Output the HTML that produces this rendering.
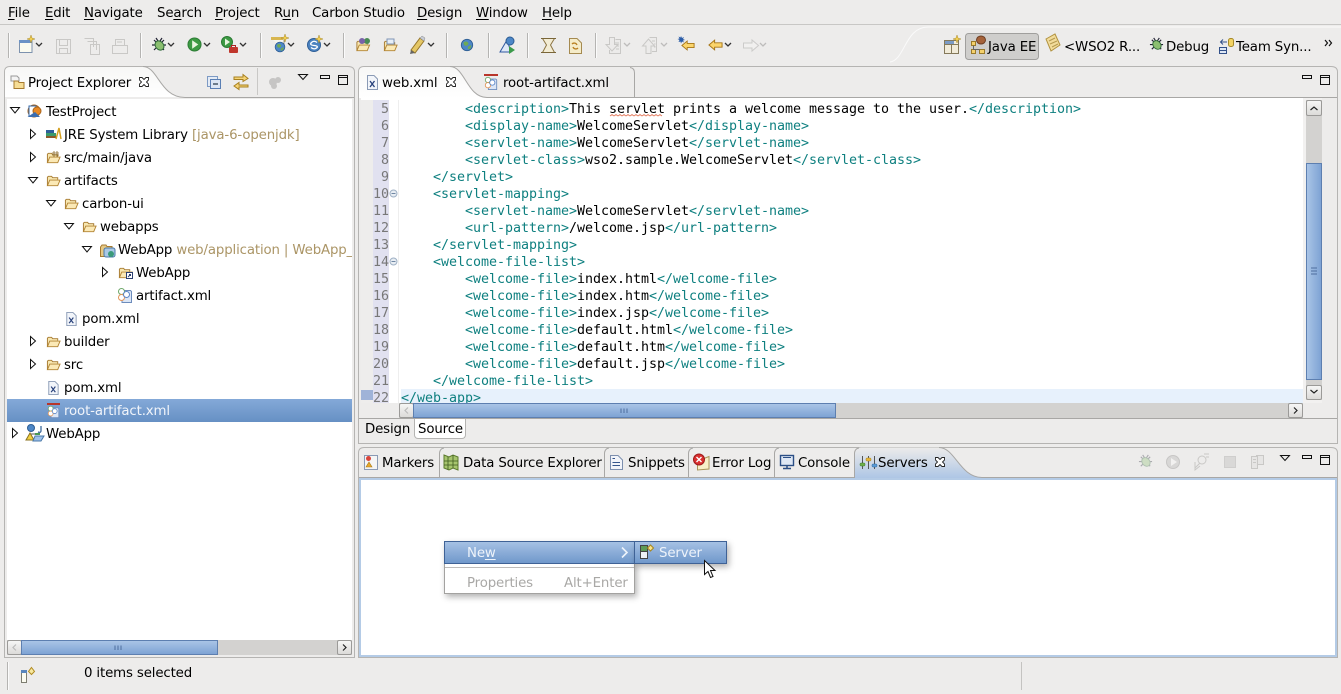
<!DOCTYPE html>
<html><head><meta charset="utf-8"><title>Eclipse</title>
<style>
html,body{margin:0;padding:0}
body{width:1341px;height:694px;overflow:hidden;position:relative;background:#edeceb;font-family:"DejaVu Sans","Liberation Sans",sans-serif;font-size:13.33px;letter-spacing:-.14px;color:#000}
.t{position:absolute;white-space:pre;line-height:16px;height:16px;margin-top:2px}
.a{position:absolute}
u{text-decoration:underline;text-underline-offset:2px}
.d{color:#ab9566}
.c{position:absolute;left:401px;white-space:pre;font-family:"DejaVu Sans Mono","Liberation Mono",monospace;font-size:13.33px;letter-spacing:-.024px;line-height:17px;height:17px;color:#000;margin-top:1px}
.c i{font-style:normal;color:#0f8080}
.n{position:absolute;width:30px;left:359px;text-align:right;font-family:"DejaVu Sans Mono","Liberation Mono",monospace;font-size:13.33px;letter-spacing:0;line-height:17px;height:17px;color:#787878;margin-top:1px}
svg.i{position:absolute;width:16px;height:16px;overflow:visible}
.sep{position:absolute;width:1px;background:#b5b4b2;border-right:1px solid #fbfbfb}
.bt{position:absolute;box-sizing:border-box;background:linear-gradient(#f6f6f5,#dcdbd9);border:1px solid #9b9a98;border-radius:2px}
.th{position:absolute;box-sizing:border-box;background:linear-gradient(#a9c4e6,#7ea3d4);border:1px solid #5d7fb0}
</style></head><body>

<svg width="0" height="0" style="position:absolute">
<defs>
<symbol id="fo" viewBox="0 0 16 16"><path d="M1.5 13.5V4.5L2.5 3.500H6L7 5H12.500V7" fill="#f8e7b0" stroke="#a67a30"/><path d="M1.500 13.500L4 7.500H15L12.500 13.500Z" fill="#fbe9b6" stroke="#b28434"/></symbol>
<symbol id="x" viewBox="0 0 16 16"><path d="M3.500 1.500H10L13.500 5V15.500H3.500Z" fill="#f2f5fa" stroke="#8a9ab5"/><path d="M6 7L10.500 13M10.500 7L6 13" stroke="#27407a" stroke-width="1.300"/></symbol>
<symbol id="art" viewBox="0 0 16 16"><path d="M5 3.500H13.500L14.500 4.500V15.500H5Z" fill="#dbe6f6" stroke="#6d8cbc"/><circle cx="4.500" cy="4.500" r="3" fill="#fff" stroke="#6ea86a"/><circle cx="4.500" cy="10.500" r="3" fill="#fff" stroke="#e2965a"/><circle cx="9.500" cy="7.500" r="3" fill="#fff" stroke="#5b86c8"/></symbol>
<symbol id="bug" viewBox="0 0 16 16"><path d="M3 3L13 13M13 3L3 13M1 8H15M5 1L7 4M11 1L9 4" stroke="#223" stroke-width="1.200"/><ellipse cx="8.500" cy="8.500" rx="4" ry="5" transform="rotate(-40 8.500 8.500)" fill="#8bbf70" stroke="#2f6a3a"/></symbol>
<symbol id="run" viewBox="0 0 16 16"><circle cx="8" cy="8" r="7" fill="#3d9a43" stroke="#2b7a33"/><path d="M5.500 3.500L12 8L5.500 12.500Z" fill="#e8f5df"/></symbol>
<symbol id="globe" viewBox="0 0 16 16"><circle cx="8" cy="8" r="6.500" fill="#4d87c7" stroke="#2d5d93"/><path d="M4 5Q7 3 9 5T7 9Q4 9 4 5ZM9 10L13 8L12 12L9 13Z" fill="#6faa55"/></symbol>
<symbol id="pj" viewBox="0 0 16 16"><path d="M2 2H8L10 4V7H2Z" fill="#f4f4f4" stroke="#999"/><path d="M5 7H9L10 8.500H15V14.500H5Z" fill="#f6dd95" stroke="#a67a30"/></symbol>
<symbol id="larr" viewBox="0 0 18 16"><path d="M1.500 8L8 2.500V5.500H16.500V10.500H8V13.500Z" fill="#fbd56c" stroke="#a67518" stroke-width="1.100"/></symbol>
</defs>
</svg>

<!-- menu -->
<div class="a" style="left:0;top:24px;width:1341px;height:1px;background:#c8c7c5"></div>
<div class="t" style="left:8px;top:4px"><u>F</u>ile</div>
<div class="t" style="left:45px;top:4px"><u>E</u>dit</div>
<div class="t" style="left:84px;top:4px"><u>N</u>avigate</div>
<div class="t" style="left:157px;top:4px">Se<u>a</u>rch</div>
<div class="t" style="left:215px;top:4px"><u>P</u>roject</div>
<div class="t" style="left:274px;top:4px">R<u>u</u>n</div>
<div class="t" style="left:312px;top:4px">Carbon Studio</div>
<div class="t" style="left:417px;top:4px"><u>D</u>esign</div>
<div class="t" style="left:476px;top:4px"><u>W</u>indow</div>
<div class="t" style="left:542px;top:4px"><u>H</u>elp</div>

<!-- toolbar separators -->
<div class="sep" style="left:8px;top:33px;height:25px"></div>
<div class="sep" style="left:140px;top:33px;height:25px"></div>
<div class="sep" style="left:260px;top:33px;height:25px"></div>
<div class="sep" style="left:343px;top:33px;height:25px"></div>
<div class="sep" style="left:446px;top:33px;height:25px"></div>
<div class="sep" style="left:488px;top:33px;height:25px"></div>
<div class="sep" style="left:527px;top:33px;height:25px"></div>
<div class="sep" style="left:595px;top:33px;height:25px"></div>

<!-- toolbar icons and all frames -->
<svg class="a" style="left:0;top:0" width="1341" height="694">
<defs>
<linearGradient id="tabW" x1="0" y1="0" x2="0" y2="1"><stop offset="0" stop-color="#f7f7f6"/><stop offset="1" stop-color="#ffffff"/></linearGradient>
<linearGradient id="tabB" x1="0" y1="0" x2="0" y2="1"><stop offset="0" stop-color="#ecebea"/><stop offset="1" stop-color="#aec6e5"/></linearGradient>
</defs>
<path d="M890 62C905 60 905 27 928 27H1341" fill="none" stroke="#fafafa"/>

<!-- left panel -->
<path d="M4.500 657.500V72Q4.500 66.500 10 66.500H348Q354.500 66.500 354.500 72V657.500Z" fill="#edeceb" stroke="#b5b4b2"/>
<path d="M5 97V72Q5 67 10 67H143C158 67 160 97 185 97Z" fill="url(#tabW)"/>
<path d="M143 66.500C158 66.500 160 97.500 185 97.500H354" fill="none" stroke="#a8a7a5"/>
<rect x="7" y="99" width="345" height="541" fill="#fff"/>

<!-- editor panel -->
<path d="M358.500 443.500V72Q358.500 66.500 364 66.500H1331Q1337.500 66.500 1337.500 72V443.500Z" fill="#edeceb" stroke="#b5b4b2"/>
<path d="M359 98V72Q359 67 364 67H450C465 67 467 98 487 98Z" fill="url(#tabW)"/>
<path d="M450 66.500C465 66.500 467 97.500 487 97.500H1337" fill="none" stroke="#a8a7a5"/>
<path d="M630 67.500Q634.500 68 634.500 73V97" fill="none" stroke="#a8a7a5"/>
<rect x="361" y="98" width="975" height="305" fill="#fff"/>
<rect x="361" y="100" width="12" height="303" fill="#eeedec"/>
<rect x="373" y="100" width="16" height="303" fill="#e1e1f0"/>
<rect x="398" y="100" width="1" height="303" fill="#eeeeee"/>
<rect x="401" y="389" width="905" height="14" fill="#e7f1fc"/>
<rect x="361" y="390" width="12" height="10" fill="#9fb3d8"/>
<rect x="1303" y="98" width="33" height="305" fill="#f2f1f0"/>
<rect x="1322" y="98" width="14" height="305" fill="#edeceb"/>
<rect x="361" y="403" width="975" height="15" fill="#edeceb"/>
<rect x="359" y="418" width="978" height="1" fill="#a8a7a5"/>

<!-- bottom panel -->
<path d="M358.500 657.500V453Q358.500 447.500 364 447.500H1331Q1337.500 447.500 1337.500 453V657.500Z" fill="#edeceb" stroke="#b5b4b2"/>
<path d="M855 478V453Q856 447.500 861 447.500H939C955 447.500 960 477 982 477V478Z" fill="url(#tabB)"/>
<path d="M939 447.500C955 447.500 960 477.500 982 477.500H1337" fill="none" stroke="#a8a7a5"/>
<path d="M359 477.500H855" stroke="#a8a7a5"/>
<path d="M439.500 477V453Q440 448.500 444 448M604.500 477V453Q605 448.500 609 448M688.500 477V453Q689 448.500 693 448M774.500 477V453Q775 448.500 779 448M854.500 477V453Q855 448.500 859 448" fill="none" stroke="#a8a7a5"/>
<rect x="359" y="478" width="978" height="179" fill="#b4cbe6"/>
<rect x="361" y="480" width="974" height="175" fill="#fff"/>

<!-- Squiggle -->
<path d="M610 116l2-1.500 2 1.500 2-1.500 2 1.500 2-1.500 2 1.500 2-1.500 2 1.500 2-1.500 2 1.500 2-1.500 2 1.500 2-1.500 2 1.500 2-1.500 2 1.500 2-1.500 2 1.500 2-1.500 2 1.500 2-1.500 2 1.500 2-1.500 2 1.500 2-1.500 2 1.500" fill="none" stroke="#e2785a" stroke-width=".8"/>

<!-- fold markers -->
<circle cx="393.500" cy="193.500" r="3.500" fill="#e8edf3" stroke="#9eb0c4"/><path d="M391.500 193.500h4" stroke="#6f87a3"/>
<circle cx="393.500" cy="261.500" r="3.500" fill="#e8edf3" stroke="#9eb0c4"/><path d="M391.500 261.500h4" stroke="#6f87a3"/>

<!-- toolbar chevrons -->
<g fill="none" stroke="#333" stroke-width="1.300">
<path d="M36 43l3 3 3-3M168 43l3 3 3-3M204 43l3 3 3-3M240 43l3 3 3-3M288 43l3 3 3-3M324 43l3 3 3-3M428 43l3 3 3-3M725 43l3 3 3-3"/>
</g>
<g fill="none" stroke="#bdbcbb" stroke-width="1.300"><path d="M624 43l3 3 3-3M661 43l3 3 3-3M760 43l3 3 3-3"/></g>

<!-- new -->
<path d="M19.500 40.500H32V52.500H19.500Z" fill="#fbfbf0" stroke="#7d92ae"/><rect x="19" y="40" width="13" height="3" fill="#6c93c6"/><path d="M31 35l1 3 3 1-3 1-1 3-1-3-3-1 3-1z" fill="#f1cf54" stroke="#a98a2a" stroke-width=".5"/>
<!-- disabled save -->
<g fill="none" stroke="#c9c8c6"><path d="M56.500 39.500H70.500V53.500H56.500Z"/><path d="M59.500 39.500V45.500H67.500V39.500M59.500 53.500V48.500H67.500V53.500"/>
<path d="M84.500 38.500H93.500V47M87.500 41.500H96.500V50M90.500 44.500H99.500V54.500H90.500Z"/>
<path d="M112.500 45.500H127.500V53.500H112.500ZM115.500 45.500V39.500H124.500V45.500M117 42H122"/></g>

<use href="#bug" x="151" y="37" width="16" height="16"/>
<use href="#run" x="187" y="37" width="15" height="15"/>
<circle cx="227" cy="42" r="5.500" fill="#3d9a43" stroke="#2b7a33"/><path d="M225 38.500L230 42L225 45.500Z" fill="#e8f5df"/>
<rect x="229" y="47" width="9" height="6" rx="1" fill="#c0362c"/><path d="M231.500 47v-1.500h4V47" fill="none" stroke="#a22"/>
<path d="M271.500 38.500H284V50" fill="#f5f5ef" stroke="#9a9a8a"/><rect x="271" y="37" width="12" height="3" fill="#d8b650"/><use href="#globe" x="274" y="41" width="12" height="12"/><path d="M285 34l1 3 3 1-3 1-1 3-1-3-3-1 3-1z" fill="#f1cf54" stroke="#a98a2a" stroke-width=".5"/>
<circle cx="314" cy="45" r="6.500" fill="#4c83c0" stroke="#2f5f97"/><path d="M317 42.500Q314 40 311.500 42.500T314 45.500T316.500 48Q314 50 311 47.500" fill="none" stroke="#fff" stroke-width="1.300"/><path d="M319 35l1 3 3 1-3 1-1 3-1-3-3-1 3-1z" fill="#f1cf54" stroke="#a98a2a" stroke-width=".5"/>
<use href="#fo" x="355" y="38" width="16" height="15"/><circle cx="367" cy="41" r="3" fill="#4a8a55"/><circle cx="362" cy="41" r="3" fill="#7a62a8"/>
<use href="#fo" x="383" y="38" width="15" height="15"/><rect x="387" y="39" width="7" height="5" fill="#e6eef8" stroke="#7f94b4"/>
<path d="M411 50L420 38L424 41L415 53Z" fill="#e5c766" stroke="#96762a"/><path d="M411 50L415 53L410 54Z" fill="#666"/><path d="M420 38l4 3 1-3-3-2z" fill="#c7ccd6" stroke="#888" stroke-width=".5"/>
<use href="#globe" x="460" y="38" width="14" height="14"/>
<path d="M500 52L507 40L511 52Z" fill="#dfe9f7" stroke="#2f58a0"/><circle cx="510" cy="41" r="4" fill="#4d87c7" stroke="#2d5d93"/><path d="M509 46L515 50L509 54Z" fill="#3c9a4a"/>
<path d="M542.500 38.500H554.500L550.500 45L554.500 52.500H542.500L546.500 45Z" fill="#f3ecd4" stroke="#8c7442"/><path d="M541 38.500H556M541 52.500H556" stroke="#7a6638"/>
<path d="M569.500 38.500H577L581.500 43V53.500H569.500Z" fill="#f5ecc9" stroke="#a58a50"/><path d="M572 44a3 3 0 0 1 5 1M578 48a3 3 0 0 1-5-1" fill="none" stroke="#b87f20" stroke-width="1.300"/>
<g fill="#ecebea" stroke="#c9c8c6">
<path d="M615.500 39.500H620.500V53.500H609.500V50"/><path d="M609.500 37.500H614.500V44.500H618L612 51L606 44.500H609.500Z"/><path d="M615 43H619M616 46H619M616 49H619" fill="none"/>
<path d="M649.500 37.500H656.500V51.500H652"/><path d="M646 53.500V46H642.500L648.500 39L654.500 46H651V53.500Z"/><path d="M652 41H655M654 44H655.500M654 47H655.500" fill="none"/>
</g>
<use href="#larr" x="680" y="39" width="16" height="13"/><path d="M681 36l1 2 2-1-1 2 2 1-2 .5 1 2-2-1-1 2-.5-2-2 .5 1-2-2-1 2-.5-1-2 2 1z" fill="#2d5ea8"/>
<use href="#larr" x="707" y="38" width="17" height="14"/>
<path d="M758.500 45.500L752 40V43H743.500V48H752V51Z" fill="#f1f0ef" stroke="#cccbca"/>

<!-- perspective -->
<path d="M944.500 40.500H958.500V53.500H944.500ZM944.500 44.500H958.500M951.500 44.500V53.500" fill="#f1ebd9" stroke="#85795a"/><rect x="945" y="41" width="9" height="3" fill="#7b9bc6"/><path d="M957 35l1 3 3 1-3 1-1 3-1-3-3-1 3-1z" fill="#f1cf54" stroke="#a98a2a" stroke-width=".5"/>
<rect x="965.500" y="33.500" width="73" height="26" rx="3" fill="#cfcecc" stroke="#a09f9d"/>
<rect x="971.500" y="41.500" width="4" height="4" fill="#f4d06b" stroke="#9a7a2a"/><rect x="971.500" y="49.500" width="4" height="4" fill="#f4d06b" stroke="#9a7a2a"/><rect x="979.500" y="49.500" width="5" height="4" fill="#f4d06b" stroke="#9a7a2a"/><path d="M973.500 45.500V49.500H979.500" fill="none" stroke="#666"/><ellipse cx="981" cy="40" rx="4.500" ry="4" fill="#a5623a" stroke="#6b3d22"/>
<path d="M1046 39L1055 34L1060 45L1051 51Z" fill="#f2dc9b" stroke="#b1923f"/><path d="M1049 41L1055 38M1050 44L1057 41M1052 47L1058 44" stroke="#b59a50"/>
<use href="#bug" x="1149" y="37" width="15" height="15"/>
<rect x="1219.500" y="47.500" width="7" height="6" fill="#dfe8f5" stroke="#33518a"/><path d="M1219 50.500H1227M1221 42H1227M1223 39.500L1220.500 42L1223 44.500" fill="none" stroke="#33518a"/><rect x="1228.500" y="38.500" width="5" height="8" rx="2" fill="#f3d364" stroke="#a68a2a"/>
<path d="M1325 40l2.500 3-2.500 3M1329 40l2.500 3-2.500 3" fill="none" stroke="#111" stroke-width="1.200"/>

<!-- panel controls -->
<g fill="none" stroke="#111">
<path d="M298.500 74.500H307.500L303 79.500Z"/><rect x="320.500" y="75.500" width="9" height="3"/><rect x="338.500" y="75.500" width="9" height="9"/><path d="M338.500 77.500H347.500"/>
<rect x="1302.500" y="75.500" width="9" height="3"/><rect x="1320.500" y="75.500" width="9" height="9"/><path d="M1320.500 77.500H1329.500"/>
<path d="M1280.500 455.500H1289.500L1285 460.500Z"/><rect x="1302.500" y="455.500" width="9" height="3"/><rect x="1320.500" y="455.500" width="9" height="9"/><path d="M1320.500 457.500H1329.500"/>
</g>
<!-- close x -->
<g fill="#fff" stroke="#222" stroke-width=".9">
<path d="M139.500 77.500H142L144 79.500L146 77.500H148.500V80L146.500 82L148.500 84V86.500H146L144 84.500L142 86.500H139.500V84L141.500 82L139.500 80Z"/>
<path d="M446.500 77.500H449L451 79.500L453 77.500H455.500V80L453.500 82L455.500 84V86.500H453L451 84.500L449 86.500H446.500V84L448.500 82L446.500 80Z"/>
<path d="M935.500 457.500H938L940 459.500L942 457.500H944.500V460L942.500 462L944.500 464V466.500H942L940 464.500L938 466.500H935.500V464L937.500 462L935.500 460Z"/>
</g>

<!-- left view toolbar -->
<rect x="207.500" y="76.500" width="10" height="10" fill="#e4ebf5" stroke="#7d9ac4"/><rect x="210.500" y="79.500" width="10" height="9" fill="#dce6f4" stroke="#5a7fb4"/><path d="M213 84H218" stroke="#234" stroke-width="1.200"/>
<path d="M234 77H243V74.500L248 78.500L243 81.500V79.500H234Z" fill="#f5d477" stroke="#a8801f"/><path d="M248 85H239V82.500L234 86L239 89.500V87H248Z" fill="#f5d477" stroke="#a8801f"/>
<path d="M257.500 68V95" stroke="#c9c8c6"/>
<g fill="#c6c5c4"><circle cx="273" cy="82" r="4"/><circle cx="278" cy="80" r="3"/><circle cx="274" cy="86" r="3"/></g>

<!-- tab icons -->
<use href="#pj" x="9" y="74" width="16" height="16"/>
<use href="#x" x="364" y="74" width="16" height="16"/>
<rect x="484" y="74" width="14" height="2" fill="#b8352a"/><use href="#art" x="483" y="76" width="16" height="14"/>

<!-- tree arrows -->
<g fill="none" stroke="#111">
<path d="M10.500 107.500H19.500L15 113Z"/>
<path d="M30.500 129.500V138.500L35.500 134ZM30.500 152.500V161.500L35.500 157Z"/>
<path d="M28.500 177.500H37.500L33 183Z"/>
<path d="M46.500 200.500H55.500L51 206Z"/>
<path d="M64.500 223.500H73.500L69 229Z"/>
<path d="M82.500 246.500H91.500L87 252Z"/>
<path d="M102.500 267.500V276.500L107.500 272Z"/>
<path d="M30.500 336.500V345.500L35.500 341ZM30.500 359.500V368.500L35.500 364Z"/>
<path d="M12.500 428.500V437.500L17.500 433Z"/>
</g>

<!-- selected row -->
<defs><linearGradient id="sel" x1="0" y1="0" x2="0" y2="1"><stop offset="0" stop-color="#84a9d8"/><stop offset="1" stop-color="#6690c4"/></linearGradient></defs>
<rect x="7" y="399" width="345" height="23" fill="url(#sel)"/>

<!-- tree icons -->
<circle cx="34" cy="111" r="6" fill="#f0a040" stroke="#a8641d"/><rect x="29" y="106" width="7" height="10" fill="#fff" stroke="#3568a8"/><circle cx="37" cy="111" r="4" fill="#e98a25" stroke="#a8641d"/><path d="M27.500 117L35 112L40 117Z" fill="#3c6eb0"/>
<rect x="46" y="136" width="10" height="2" fill="#8c5a2a"/><rect x="46" y="133" width="10" height="3" fill="#3b9a6a"/><rect x="46" y="130" width="8" height="3" fill="#2e5f99"/><path d="M56 139L59 128L61 139" fill="none" stroke="#d4a020" stroke-width="1.500"/>
<use href="#fo" x="46" y="150" width="15" height="15"/><path d="M54 151v6M57 151v6M52 153h7M52 155h7" stroke="#8a6a2a" stroke-width=".8"/>
<use href="#fo" x="46" y="173" width="15" height="15"/>
<use href="#fo" x="64" y="196" width="15" height="15"/>
<use href="#fo" x="82" y="219" width="15" height="15"/>
<path d="M100.500 256.500V247L102 245H106L107 246.500H112V256.500Z" fill="#e6c985" stroke="#a67a30"/><rect x="104" y="248" width="11" height="9" rx="2" fill="#a9c8e6" stroke="#4a78a8"/><circle cx="111" cy="254" r="3" fill="#3b9a7a"/>
<use href="#fo" x="118" y="265" width="15" height="15"/><rect x="126.500" y="272.500" width="6" height="6" fill="#fff" stroke="#2b3f70"/><path d="M128 277L130.500 274.500M129 274.500H130.500V276" stroke="#2b3f70" fill="none"/>
<use href="#art" x="117" y="287" width="16" height="16"/>
<use href="#x" x="63" y="311" width="16" height="15"/>
<use href="#fo" x="46" y="334" width="15" height="15"/>
<use href="#fo" x="46" y="357" width="15" height="15"/>
<use href="#x" x="45" y="380" width="16" height="15"/>
<rect x="47" y="403" width="13" height="2" fill="#b8352a"/><use href="#art" x="46" y="405" width="15" height="13"/>
<circle cx="31" cy="428" r="3.500" fill="#4d87c7" stroke="#2d5d93"/><path d="M29 434L37 434" stroke="#555"/><path d="M30 433L34 440H26Z" fill="#f3d040" stroke="#8a7220"/><path d="M35 436H44L41 441H33Z" fill="#9cc0ea" stroke="#4a78a8"/><path d="M41 426V431Q41 433 38 432" fill="none" stroke="#2d5d93" stroke-width="1.200"/><rect x="35" y="433" width="5" height="2" fill="#4a9a55"/>

<!-- bottom tab icons -->
<path d="M364.500 455.500H377.500V469.500H364.500Z" fill="#f5f5f5" stroke="#8a9ab5"/><circle cx="368.500" cy="458.500" r="2.500" fill="#d9443a"/><path d="M369 462L372 467H366Z" fill="#e8a82a" stroke="#a67818" stroke-width=".6"/>
<path d="M444 455L449 457L453 455L458 457V470L453 468L449 470L444 468Z" fill="#a7c56e" stroke="#5c7a2e"/><path d="M448 457V470M453 455V468M444 461H458M444 465H458" stroke="#3e5a1e" stroke-width=".8"/>
<path d="M610.500 455.500H618L622.500 460V469.500H610.500Z" fill="#f2f4f9" stroke="#7d8fae"/><path d="M612.500 458.500H615M612.500 462.500H620M612.500 465.500H620" stroke="#34558c"/>
<path d="M700 460L709 456.500V469L697.500 470V464" fill="#f7efc9" stroke="#a8955a"/><circle cx="699" cy="459.500" r="5.500" fill="#d92f2f" stroke="#9c1c1c"/><path d="M696.500 457L701.500 462M701.500 457L696.500 462" stroke="#fff" stroke-width="1.400"/>
<rect x="780.500" y="455.500" width="13" height="10" fill="#dfe8f5" stroke="#2b4f86" stroke-width="1.400"/><path d="M783 457.500H791" stroke="#2b4f86"/><path d="M783 468.500H791M787 465.500V468.500" stroke="#2b4f86" stroke-width="1.500"/>
<path d="M862.500 456V469M868.500 456V469M874.500 456V469" stroke="#555"/><rect x="860" y="463" width="5" height="3" rx="1" fill="#6fb04a" stroke="#3f7a2a" stroke-width=".5"/><rect x="866" y="458" width="5" height="3" rx="1" fill="#e5b53a" stroke="#a68018" stroke-width=".5"/><rect x="872" y="464" width="5" height="3" rx="1" fill="#5a9ad5" stroke="#2f6aa0" stroke-width=".5"/>

<!-- servers toolbar disabled -->
<g opacity=".32"><use href="#bug" x="1138" y="454" width="15" height="15"/></g>
<circle cx="1173" cy="462" r="6.500" fill="#d8d7d6" stroke="#c7c6c5"/><path d="M1171 458L1177 462L1171 466Z" fill="#f2f1f0"/>
<g fill="none" stroke="#c9c8c6"><circle cx="1202" cy="460" r="4"/><path d="M1195 468L1200 463M1195 462V470L1200 466M1204 454H1209M1206 457H1209"/></g>
<rect x="1224.500" y="456.500" width="11" height="11" fill="#d9d8d7" stroke="#cfcecd"/>
<g fill="#e6e5e4" stroke="#c9c8c6"><path d="M1256.500 455.500H1263.500V464.500H1256.500Z"/><path d="M1251.500 456.500H1257.500V468.500H1251.500Z"/><path d="M1253 459.500H1256M1253 462.500H1256"/></g>

<!-- status -->
<path d="M7.500 662V690" stroke="#b5b4b2"/><path d="M8.500 662V690" stroke="#fbfbfb"/>
<path d="M1021.500 662V690" stroke="#c4c3c1"/>
<rect x="21.500" y="671.500" width="5" height="11" fill="#fbfbf0" stroke="#7d7d70"/><rect x="21" y="670" width="6" height="3" fill="#5a86bc"/><path d="M31.500 667.500L34.500 671.500L31.500 674.500L28.500 671.500Z" fill="#f7e8a0" stroke="#b08a20"/>
</svg>

<!-- tab labels -->
<div class="t" style="left:28px;top:74px">Project Explorer</div>
<div class="t" style="left:382px;top:74px">web.xml</div>
<div class="t" style="left:503px;top:74px">root-artifact.xml</div>
<div class="t" style="left:988px;top:38px">Java EE</div>
<div class="t" style="left:1064px;top:38px">&lt;WSO2 R...</div>
<div class="t" style="left:1166px;top:38px">Debug</div>
<div class="t" style="left:1236px;top:38px">Team Syn...</div>

<!-- tree -->
<div class="t" style="left:46px;top:103px">TestProject</div>
<div class="t" style="left:64px;top:126px">JRE System Library <span class="d">[java-6-openjdk]</span></div>
<div class="t" style="left:64px;top:149px">src/main/java</div>
<div class="t" style="left:64px;top:172px">artifacts</div>
<div class="t" style="left:82px;top:195px">carbon-ui</div>
<div class="t" style="left:100px;top:218px">webapps</div>
<div class="t" style="left:118px;top:241px;width:234px;overflow:hidden">WebApp <span class="d">web/application | WebApp_1.0.0</span></div>
<div class="t" style="left:136px;top:264px">WebApp</div>
<div class="t" style="left:136px;top:287px">artifact.xml</div>
<div class="t" style="left:82px;top:310px">pom.xml</div>
<div class="t" style="left:64px;top:333px">builder</div>
<div class="t" style="left:64px;top:356px">src</div>
<div class="t" style="left:64px;top:379px">pom.xml</div>
<div class="t" style="left:64px;top:402px;color:#f0f4fa">root-artifact.xml</div>
<div class="t" style="left:46px;top:425px">WebApp</div>

<!-- line numbers -->
<div class="n" style="top:100px">5</div><div class="n" style="top:117px">6</div><div class="n" style="top:134px">7</div><div class="n" style="top:151px">8</div><div class="n" style="top:168px">9</div><div class="n" style="top:185px">10</div><div class="n" style="top:202px">11</div><div class="n" style="top:219px">12</div><div class="n" style="top:236px">13</div><div class="n" style="top:253px">14</div><div class="n" style="top:270px">15</div><div class="n" style="top:287px">16</div><div class="n" style="top:304px">17</div><div class="n" style="top:321px">18</div><div class="n" style="top:338px">19</div><div class="n" style="top:355px">20</div><div class="n" style="top:372px">21</div><div class="n" style="top:389px;height:14px;overflow:hidden">22</div>

<!-- code -->
<div class="c" style="top:100px">        <i>&lt;description&gt;</i>This servlet prints a welcome message to the user.<i>&lt;/description&gt;</i></div>
<div class="c" style="top:117px">        <i>&lt;display-name&gt;</i>WelcomeServlet<i>&lt;/display-name&gt;</i></div>
<div class="c" style="top:134px">        <i>&lt;servlet-name&gt;</i>WelcomeServlet<i>&lt;/servlet-name&gt;</i></div>
<div class="c" style="top:151px">        <i>&lt;servlet-class&gt;</i>wso2.sample.WelcomeServlet<i>&lt;/servlet-class&gt;</i></div>
<div class="c" style="top:168px">    <i>&lt;/servlet&gt;</i></div>
<div class="c" style="top:185px">    <i>&lt;servlet-mapping&gt;</i></div>
<div class="c" style="top:202px">        <i>&lt;servlet-name&gt;</i>WelcomeServlet<i>&lt;/servlet-name&gt;</i></div>
<div class="c" style="top:219px">        <i>&lt;url-pattern&gt;</i>/welcome.jsp<i>&lt;/url-pattern&gt;</i></div>
<div class="c" style="top:236px">    <i>&lt;/servlet-mapping&gt;</i></div>
<div class="c" style="top:253px">    <i>&lt;welcome-file-list&gt;</i></div>
<div class="c" style="top:270px">        <i>&lt;welcome-file&gt;</i>index.html<i>&lt;/welcome-file&gt;</i></div>
<div class="c" style="top:287px">        <i>&lt;welcome-file&gt;</i>index.htm<i>&lt;/welcome-file&gt;</i></div>
<div class="c" style="top:304px">        <i>&lt;welcome-file&gt;</i>index.jsp<i>&lt;/welcome-file&gt;</i></div>
<div class="c" style="top:321px">        <i>&lt;welcome-file&gt;</i>default.html<i>&lt;/welcome-file&gt;</i></div>
<div class="c" style="top:338px">        <i>&lt;welcome-file&gt;</i>default.htm<i>&lt;/welcome-file&gt;</i></div>
<div class="c" style="top:355px">        <i>&lt;welcome-file&gt;</i>default.jsp<i>&lt;/welcome-file&gt;</i></div>
<div class="c" style="top:372px">    <i>&lt;/welcome-file-list&gt;</i></div>
<div class="c" style="top:389px;height:14px;overflow:hidden"><i>&lt;/web-app&gt;</i></div>

<!-- editor v scrollbar -->
<div class="a" style="left:1306px;top:100px;width:16px;height:300px;background:#d3d2d0"></div>
<div class="bt" style="left:1306px;top:100px;width:16px;height:16px"></div>
<div class="bt" style="left:1306px;top:385px;width:16px;height:15px"></div>
<div class="th" style="left:1306px;top:163px;width:16px;height:217px;background:linear-gradient(90deg,#a9c4e6,#7ea3d4)"></div>
<svg class="a" style="left:1306px;top:100px" width="16" height="300"><path d="M4.500 10L8 7L11.500 10M4.500 290L8 293L11.500 290" fill="none" stroke="#222" stroke-width="1.200"/><path d="M5 168H11M5 171H11M5 174H11" stroke="#4d6d9e"/></svg>

<!-- editor h scrollbar -->
<div class="a" style="left:399px;top:403px;width:904px;height:15px;background:#d3d2d0"></div>
<div class="bt" style="left:399px;top:403px;width:15px;height:15px"></div>
<div class="bt" style="left:1288px;top:403px;width:15px;height:15px"></div>
<div class="th" style="left:413px;top:403px;width:423px;height:15px"></div>
<svg class="a" style="left:399px;top:403px" width="904" height="15"><path d="M9 4.500L6 7.500L9 10.500" fill="none" stroke="#bbb" stroke-width="1.200"/><path d="M895 4.500L898 7.500L895 10.500" fill="none" stroke="#222" stroke-width="1.200"/><path d="M222 5.500V10M225 5.500V10M228 5.500V10" stroke="#4d6d9e"/></svg>

<!-- design/source -->
<div class="t" style="left:365px;top:420px">Design</div>
<div class="a" style="left:414px;top:419px;width:52px;height:20px;box-sizing:border-box;background:#fff;border:1px solid #b5b4b2;border-top:0;border-radius:0 0 4px 4px"></div>
<div class="t" style="left:418px;top:420px">Source</div>

<!-- left h scrollbar -->
<div class="a" style="left:7px;top:640px;width:345px;height:15px;background:#d3d2d0"></div>
<div class="bt" style="left:7px;top:640px;width:15px;height:15px"></div>
<div class="bt" style="left:337px;top:640px;width:15px;height:15px"></div>
<div class="th" style="left:21px;top:640px;width:197px;height:15px"></div>
<svg class="a" style="left:7px;top:640px" width="345" height="15"><path d="M9 4.500L6 7.500L9 10.500" fill="none" stroke="#bbb" stroke-width="1.200"/><path d="M336 4.500L339 7.500L336 10.500" fill="none" stroke="#222" stroke-width="1.200"/><path d="M108 5.500V10M111 5.500V10M114 5.500V10" stroke="#4d6d9e"/></svg>

<!-- bottom tabs -->
<div class="t" style="left:382px;top:454px">Markers</div>
<div class="t" style="left:463px;top:454px">Data Source Explorer</div>
<div class="t" style="left:628px;top:454px">Snippets</div>
<div class="t" style="left:712px;top:454px">Error Log</div>
<div class="t" style="left:798px;top:454px">Console</div>
<div class="t" style="left:878px;top:454px">Servers</div>

<!-- context menu -->
<div class="a" style="left:444px;top:541px;width:191px;height:53px;box-sizing:border-box;background:#fff;border:1px solid #a3a2a0;box-shadow:2px 3px 6px rgba(0,0,0,.3)"></div>
<div class="a" style="left:444px;top:541px;width:191px;height:23px;box-sizing:border-box;background:linear-gradient(#a5c1e4,#7098cb);border:1px solid #3f6296"></div>
<div class="a" style="left:445px;top:567px;width:189px;height:1px;background:#bdbcbb"></div>
<div class="t" style="left:467px;top:544px;color:#eef3fa">Ne<u>w</u></div>
<svg class="a" style="left:620px;top:546px" width="10" height="13"><path d="M2 1.500L7 6.500L2 11.500" fill="none" stroke="#eef3fa" stroke-width="1.600"/></svg>
<div class="t" style="left:467px;top:574px;color:#a9a8a6">Properties</div>
<div class="t" style="left:564px;top:574px;color:#a9a8a6">Alt+Enter</div>
<div class="a" style="left:634px;top:541px;width:93px;height:23px;box-sizing:border-box;background:linear-gradient(#a5c1e4,#7098cb);border:1px solid #3f6296;box-shadow:2px 3px 6px rgba(0,0,0,.3)"></div>
<div class="t" style="left:659px;top:544px;color:#eef3fa">Server</div>
<svg class="a" style="left:640px;top:544px" width="16" height="17"><rect x=".5" y="1.500" width="7" height="6" fill="#5d9a55" stroke="#444"/><rect x=".5" y="7.500" width="7" height="7" fill="#eef2f6" stroke="#444"/><path d="M10.500 1L13.500 4L10.500 7L7.500 4Z" fill="#f7e28a" stroke="#a6851d"/></svg>

<!-- cursor -->
<svg class="a" style="left:703px;top:559px" width="16" height="22"><path d="M1.500 1.500V15.500L5 12.500L7.500 18.500L10 17.500L7.500 11.500H12Z" fill="#fff" stroke="#111"/></svg>

<!-- status text -->
<div class="t" style="left:84px;top:664px">0 items selected</div>

</body></html>
